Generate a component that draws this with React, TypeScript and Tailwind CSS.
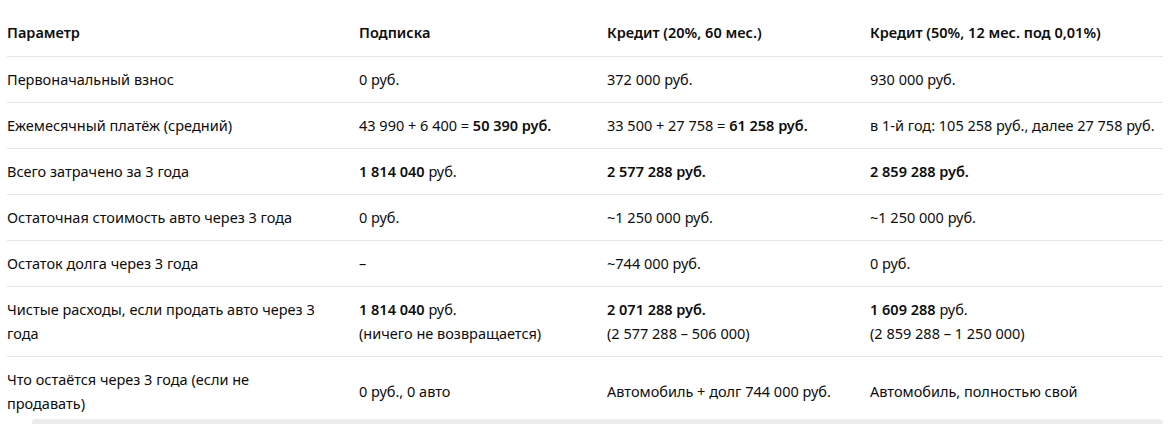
import React from "react";

type Cell = React.ReactNode;

const B = ({ children }: { children: React.ReactNode }) => (
  <span className="font-semibold">{children}</span>
);

const rows: Cell[][] = [
  ["Первоначальный взнос", "0 руб.", "372 000 руб.", "930 000 руб."],
  [
    "Ежемесячный платёж (средний)",
    <>43 990 + 6 400 = <B>50 390 руб.</B></>,
    <>33 500 + 27 758 = <B>61 258 руб.</B></>,
    "в 1-й год: 105 258 руб., далее 27 758 руб.",
  ],
  [
    "Всего затрачено за 3 года",
    <><B>1 814 040</B> руб.</>,
    <B>2 577 288 руб.</B>,
    <B>2 859 288 руб.</B>,
  ],
  ["Остаточная стоимость авто через 3 года", "0 руб.", "~1 250 000 руб.", "~1 250 000 руб."],
  ["Остаток долга через 3 года", "–", "~744 000 руб.", "0 руб."],
  [
    <>Чистые расходы, если продать авто через 3<br />года</>,
    <><B>1 814 040</B> руб.<br />(ничего не возвращается)</>,
    <><B>2 071 288 руб.</B><br />(2 577 288 – 506 000)</>,
    <><B>1 609 288</B> руб.<br />(2 859 288 – 1 250 000)</>,
  ],
  [
    <>Что остаётся через 3 года (если не<br />продавать)</>,
    "0 руб., 0 авто",
    "Автомобиль + долг 744 000 руб.",
    "Автомобиль, полностью свой",
  ],
];

const widths = ["w-[352px]", "w-[248px]", "w-[263px]", "w-[293px]"];

export default function App() {
  return (
    <div
      className="w-[1169px] h-[424px] overflow-hidden bg-white text-[#0d0d0d] text-[14.5px] leading-[24px] pt-[10px]"
      style={{ fontFamily: '"Noto Sans", "Open Sans", sans-serif' }}
    >
      <table className="ml-[7px] w-[1156px] table-fixed border-collapse">
        <colgroup>
          {widths.map((w, i) => (
            <col key={i} className={w} />
          ))}
        </colgroup>
        <thead>
          <tr className="border-b border-[#e5e5e5]">
            {["Параметр", "Подписка", "Кредит (20%, 60 мес.)", "Кредит (50%, 12 мес. под 0,01%)"].map(
              (h, i) => (
                <th
                  key={i}
                  className="text-left font-semibold pt-[10px] pb-[12px] whitespace-nowrap align-middle"
                >
                  {h}
                </th>
              )
            )}
          </tr>
        </thead>
        <tbody>
          {rows.map((r, ri) => {
            const last = ri === rows.length - 1;
            return (
              <tr
                key={ri}
                className={last ? "" : "border-b border-[#e5e5e5]"}
              >
                {r.map((c, ci) => (
                  <td
                    key={ci}
                    className={
                      "align-middle whitespace-nowrap pt-[10px] " +
                      (last ? "pb-[4px]" : "pb-[11px]")
                    }
                  >
                    {c}
                  </td>
                ))}
              </tr>
            );
          })}
        </tbody>
      </table>
      <div className="ml-[32px] w-[1131px] h-[8px] rounded-[4px] bg-[#ececec]" />
    </div>
  );
}
